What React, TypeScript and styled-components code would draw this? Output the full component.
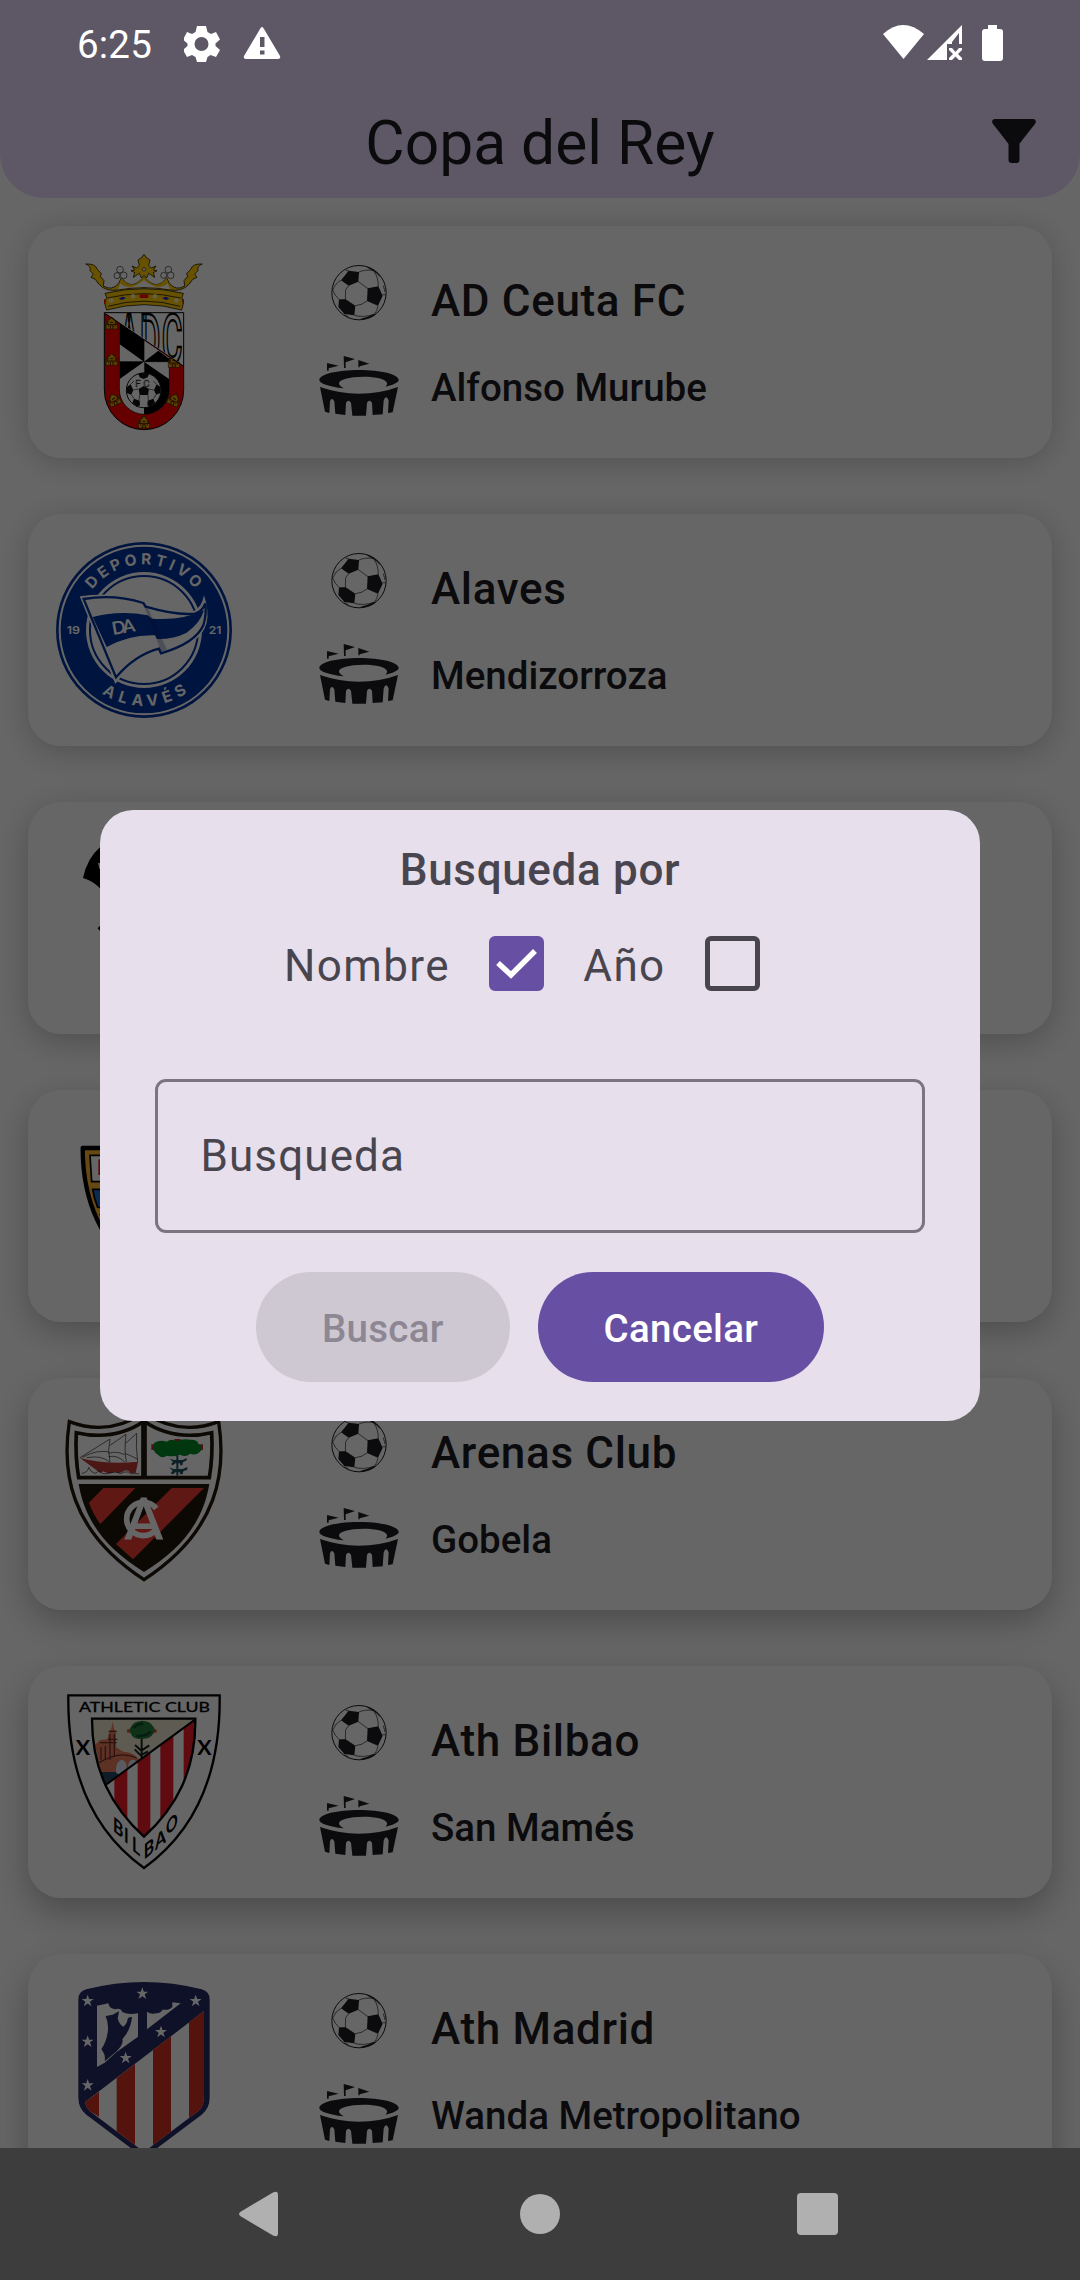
import React from "react";
import styled, { createGlobalStyle } from "styled-components";

const GlobalStyle = createGlobalStyle`
  * { box-sizing: border-box; }
  body { margin: 0; background: #000; font-family: Roboto, "Liberation Sans", sans-serif; }
`;

const Screen = styled.div`
  position: relative;
  width: 1080px;
  height: 2280px;
  overflow: hidden;
  display: flex;
  flex-direction: column;
  background: #ffffff;
  color: #1c1b1f;
`;

const TopBar = styled.header`
  flex: none;
  height: 198px;
  padding: 90px 33px 0;
  display: grid;
  grid-template-columns: 66px 1fr 66px;
  align-items: start;
  background: #eaddff;
  border-radius: 0 0 44px 44px;
`;

const Title = styled.h1`
  margin: 1px 0 0;
  grid-column: 2;
  text-align: center;
  font-size: 60.5px;
  font-weight: 400;
  line-height: 106px;
`;

const FilterButton = styled.button`
  margin: 18px 0 0;
  padding: 0;
  border: 0;
  background: none;
  color: inherit;
  width: 66px;
  height: 66px;
  svg { display: block; }
`;

const List = styled.main`
  flex: 1;
  min-height: 0;
  overflow: hidden;
  padding: 28px;
  display: flex;
  flex-direction: column;
  gap: 56px;
`;

const Card = styled.article<{ $depth: number }>`
  flex: none;
  height: 232px;
  padding: 28px;
  display: flex;
  background: #ffffff;
  border-radius: 33px;
  box-shadow: 0 ${(p) => 4 + p.$depth * 2}px ${(p) => 30 + p.$depth}px rgba(0, 0, 0, ${(p) => 0.2 + p.$depth * 0.015});
`;

const CrestBox = styled.div`
  width: 176px;
  height: 176px;
  svg { display: block; overflow: visible; }
`;

const IconColumn = styled.div`
  margin-left: 87px;
  width: 80px;
  padding-top: 9px;
  display: flex;
  flex-direction: column;
  align-items: center;
  gap: 33px;
  svg { display: block; flex: none; }
`;

const TextColumn = styled.div`
  margin-left: 32px;
  padding-top: 14px;
`;

const TeamName = styled.div`
  font-size: 44px;
  font-weight: 500;
  line-height: 66px;
  letter-spacing: 0.66px;
  white-space: nowrap;
`;

const Ground = styled.div`
  margin-top: 26px;
  font-size: 38.5px;
  font-weight: 500;
  line-height: 55px;
  letter-spacing: 0;
  white-space: nowrap;
`;

const Scrim = styled.div`
  position: absolute;
  inset: 0 0 132px;
  background: rgba(0, 0, 0, 0.6);
`;

const StatusBar = styled.div`
  position: absolute;
  inset: 0 0 auto;
  height: 88px;
  padding: 0 77px 0 77px;
  display: flex;
  justify-content: space-between;
  color: #ffffff;
`;

const StatusGroup = styled.div`
  display: flex;
  svg { display: block; }
`;

const Clock = styled.span`
  width: 107px;
  font-size: 38.5px;
  line-height: 89px;
  letter-spacing: 0.2px;
`;

const Dialog = styled.section`
  position: absolute;
  left: 100px;
  top: 810px;
  width: 880px;
  height: 611px;
  padding: 27px 55px 0;
  display: flex;
  flex-direction: column;
  background: #e7dfec;
  color: #49454f;
  border-radius: 33px;
`;

const DialogTitle = styled.h2`
  margin: 0;
  text-align: center;
  font-size: 44px;
  font-weight: 500;
  line-height: 66px;
  letter-spacing: 0.66px;
`;

const Options = styled.div`
  height: 120px;
  display: flex;
  align-items: center;
  padding-left: 129px;
`;

const OptionLabel = styled.span`
  font-size: 44px;
  line-height: 66px;
  letter-spacing: 1.375px;
  padding-top: 5px;
`;

const CheckBox = styled.span<{ $checked?: boolean }>`
  flex: none;
  width: 55px;
  height: 55px;
  margin: 0 39.5px 0 39px;
  border-radius: 6px;
  border: 5px solid ${(p) => (p.$checked ? "#6750a4" : "#49454f")};
  background: ${(p) => (p.$checked ? "#6750a4" : "transparent")};
  svg { display: block; margin: -5px; }
`;

const Field = styled.div`
  margin-top: 56px;
  height: 154px;
  padding: 0 42.5px;
  display: flex;
  align-items: center;
  border: 3px solid #7b7483;
  border-radius: 11px;
  font-size: 44px;
  letter-spacing: 1.1px;
`;

const Actions = styled.div`
  margin-top: 39px;
  display: flex;
  justify-content: center;
  gap: 28px;
`;

const Action = styled.button<{ $primary?: boolean }>`
  height: 110px;
  padding: 2px 66px 0;
  border: 0;
  border-radius: 55px;
  font: 500 38.5px Roboto, "Liberation Sans", sans-serif;
  letter-spacing: 0.28px;
  background: ${(p) => (p.$primary ? "#6750a4" : "#cec8d3")};
  color: ${(p) => (p.$primary ? "#ffffff" : "#8d8794")};
`;

const NavBar = styled.nav`
  flex: none;
  height: 132px;
  display: flex;
  align-items: center;
  justify-content: space-between;
  padding: 0 238px 0 236px;
  background: #3d3d3d;
  svg { display: block; }
`;

const Ball = () => (
  <svg width="58" height="59" viewBox="930 159 174 177" fill="none" stroke="#1c1b1f">
    <circle cx="1017" cy="248" r="81.5" strokeWidth="3" />
    <g fill="#1c1b1f" stroke="none">
      <path d="M986 182L1017 186L1015 215L986 227L963 211Z" />
      <path d="M1043 235L1075 229L1088 257L1074 287L1041 273Z" />
      <path d="M957 268H977L1006 287L1003 316L973 312L955 291Z" />
      <path d="M1042 170Q1068 178 1084 204L1078 199Q1066 184 1042 173Z" />
      <path d="M1022 329Q1050 327 1067 314L1062 312Q1044 321 1022 326Z" />
    </g>
    <g strokeWidth="2">
      <path d="M986 227L977 239L976 270M1015 215L1044 236M1041 273Q1025 286 1006 287" />
      <path d="M963 211Q946 219 939 239M957 268Q944 256 938 240M986 182L978 181" />
      <path d="M1017 186Q1035 177 1065 182M1062 184Q1075 202 1075 229M1088 254L1097 254M1074 287Q1073 302 1062 314" />
      <path d="M1003 316Q1030 324 1062 313M973 312L988 324M1090 227L1095 246" />
    </g>
  </svg>
);

const Stadium = () => (
  <svg width="80" height="62" viewBox="897 435 240 186" fill="#1c1b1f">
    <path d="M921 459L956 467L926 475V482H921Z" />
    <path d="M971 438L1005 447L977 457V474H972Z" />
    <path d="M1015 450L1048 461L1019 469V472H1015Z" />
    <path d="M898 510C898 493 951 480 1017 480S1136 493 1136 510C1136 517 1120 525 1096 530C1101 527 1101 523 1101 520C1101 508 1070 500 1029 500S957 509 957 520C957 527 965 531 972 535C925 530 898 520 898 510Z" />
    <path d="M900 531Q958 551 1017 551Q1080 551 1134 531L1118 607L1104 609L1106 572Q1098 552 1091 572L1088 613L1058 615L1056 578Q1048 566 1041 578L1038 617H997L993 578Q985 566 978 578L976 615L946 611L943 574Q935 560 930 574L928 609L915 605Z" />
  </svg>
);

const Castle = ({ x, y, r = 0 }: { x: number; y: number; r?: number }) => (
  <g transform={`translate(${x} ${y}) rotate(${r})`}>
    <path d="M-17 17V-3H-14V2H-11V-10H-6V-15H-2V-18H2V-15H6V-10H11V2H14V-3H17V17Z" fill="#e0ad00" stroke="#3a2a00" strokeWidth="2" />
    <path d="M-4 17V8Q0 3 4 8V17M-11 8H-8M8 8H11M-5 -3H5M-16 4H16" fill="none" stroke="#5a1000" strokeWidth="3" />
  </g>
);

const CeutaCrest = () => (
  <svg width="176" height="176" viewBox="108 132 528 528">
    <defs>
      <clipPath id="ceuta-shield"><path d="M253 308H491V540A119 119 0 0 1 253 540Z" /></clipPath>
      <clipPath id="ceuta-core"><path d="M298 340L372 390L448 443V538A75 75 0 0 1 298 538Z" /></clipPath>
      <clipPath id="ceuta-top"><path d="M258 308H491V466Z" /></clipPath>
    </defs>
    <g fill="#ffcc00" stroke="#2a2000" strokeWidth="2.5">
      <path d="M197 162Q226 160 232 178L245 192L240 198L252 212L250 228Q276 244 296 220L304 203Q334 246 372 200Q410 246 440 203L448 220Q468 244 494 228L492 212L504 198L499 192L512 178Q518 160 547 162Q530 168 534 182L524 192L531 202L518 208L508 222Q486 246 450 240Q372 226 294 240Q258 246 236 222L226 208L213 202L220 192L210 182Q214 168 197 162Z" />
      <path d="M304 214Q322 240 345 225L372 210L399 225Q422 240 440 214L450 238Q372 224 294 238Z" fill="#ffffff" stroke="none" />
      <path d="M304 203L300 220Q330 246 372 209Q414 246 444 220L440 203Q410 246 372 200Q334 246 304 203Z" stroke="none" />
      <path d="M255 250Q372 222 490 250L486 262L490 280L485 300Q372 268 260 300L254 280L260 262Z" />
      <path d="M372 133L380 144L390 150L386 166L394 174L408 168L400 180L411 182L400 188L404 202L386 190L380 204L372 196L364 204L358 190L340 202L344 188L333 182L344 180L336 168L350 174L358 166L354 150L364 144Z" />
    </g>
    <path d="M262 264Q372 238 482 264M264 289Q372 258 480 289" fill="none" stroke="#4a3900" strokeWidth="3" />
    <rect x="359" y="253" width="26" height="11" fill="#ff1000" />
    <path d="M296 266L308 260L318 264L306 270ZM426 264L438 260L448 266L438 270Z" fill="#1820d0" />
    <path d="M252 268h4v14h-4zM488 268h4v14h-4z" fill="#f01010" />
    <g fill="#ffffff" stroke="#222" strokeWidth="2">
      <circle cx="300" cy="179" r="10" /><circle cx="291" cy="197" r="9" /><circle cx="311" cy="196" r="10" />
      <circle cx="445" cy="179" r="10" /><circle cx="431" cy="196" r="9" /><circle cx="452" cy="196" r="10" />
      <circle cx="372" cy="178" r="5" />
    </g>
    <g fill="#fff0b0">
      <circle cx="339" cy="259" r="7" /><circle cx="405" cy="259" r="7" /><circle cx="274" cy="271" r="7" /><circle cx="469" cy="271" r="7" />
    </g>
    <g clipPath="url(#ceuta-shield)">
      <path d="M253 308L491 468V660H253Z" fill="#ff0000" />
      <path d="M298 340L448 443V538A75 75 0 0 1 298 538Z" fill="#ffffff" />
      <g clipPath="url(#ceuta-core)" fill="#000">
        <path d="M298 330V402L372 455V390ZM372 455L415 422L460 455ZM298 455H372L298 508ZM372 455L448 508V620H372Z" />
      </g>
      <path d="M298 340V538A75 75 0 0 0 448 538V443M372 390V455M298 455H448" fill="none" stroke="#000" strokeWidth="2" />
      <path d="M372 455V490" stroke="#eee" strokeWidth="2" />
      <Castle x={275} y={340} /><Castle x={275} y={449} /><Castle x={462} y={455} />
      <Castle x={282} y={569} r={-25} /><Castle x={462} y={569} r={25} /><Castle x={372} y={637} />
      <path d="M258 308L491 465V308Z" fill="#ffffff" />
    </g>
    <g clipPath="url(#ceuta-top)">
      <g transform="translate(297 460) scale(1 2.55)" fontFamily="Roboto, sans-serif" fontSize="80" fontWeight="500" fill="none" stroke="#000" strokeWidth="3">
        <text x="0" y="0" textLength="60" lengthAdjust="spacingAndGlyphs">A</text>
        <text x="62" y="0" textLength="62" lengthAdjust="spacingAndGlyphs">D</text>
        <text x="128" y="0" textLength="62" lengthAdjust="spacingAndGlyphs">C</text>
      </g>
    </g>
    <path d="M256 311L491 469" stroke="#000" strokeWidth="3" />
    <circle cx="371" cy="541" r="52" fill="#fff" stroke="#111" strokeWidth="3" />
    <g fill="#111">
      <path d="M371 528L387 537L384 555H359L356 537ZM355 491Q371 486 387 491L383 502L371 507L359 502ZM320 532L332 523L340 540L334 554L320 549ZM422 532L410 523L402 540L408 554L422 549ZM337 578L342 566L359 572L360 586L350 590ZM405 578L400 566L383 572L382 586L392 590Z" />
    </g>
    <path d="M332 523L342 513M410 523L400 513M340 540L356 537M387 537L402 540M359 555L357 572M384 555L385 572M334 554L342 566M408 554L400 566" stroke="#222" strokeWidth="2" />
    <text x="371" y="530" textAnchor="middle" fontFamily="Roboto, sans-serif" fontSize="29" letterSpacing="8" fill="#fff" stroke="#222" strokeWidth="1.5">FC</text>
    <path d="M253 308H491V540A119 119 0 0 1 253 540Z" fill="none" stroke="#000" strokeWidth="3" />
  </svg>
);

const AlavesCrest = () => (
  <svg width="176" height="176" viewBox="108 126 528 528">
    <defs>
      <path id="alaves-top" d="M175 390A197 197 0 0 1 569 390" />
      <path id="alaves-bottom" d="M144 390A228 228 0 0 0 600 390" />
    </defs>
    <circle cx="372" cy="390" r="264" fill="#0032a0" />
    <circle cx="372" cy="390" r="253" fill="none" stroke="#fff" strokeWidth="6" />
    <circle cx="372" cy="390" r="174" fill="#fff" />
    <circle cx="372" cy="390" r="162" fill="none" stroke="#0032a0" strokeWidth="6" />
    <path d="M179 289Q283 272 378 306Q470 339 522 333Q545 322 552 286Q568 334 560 368Q552 400 520 425Q480 452 419 467L413 454Q345 474 286 552Z" fill="#fff" />
    <path d="M191 297Q283 281 370 309L377 320Q470 347 525 341Q546 335 556 310Q560 344 550 376Q526 430 423 460L417 446Q345 465 288 532Z" fill="#fff" stroke="#0032a0" strokeWidth="7" />
    <path d="M218 351Q300 330 383 346L396 356Q490 362 552 330Q542 368 500 398Q460 418 411 417L405 406Q330 403 260 441Z" fill="#0032a0" />
    <path d="M372 318L384 325L441 449L424 455Z" fill="#001f63" fillOpacity=".25" />
    <g fill="#fff" fontFamily="Inter, Lato, sans-serif" fontWeight="700">
      <text fontSize="46" textLength="356"><textPath href="#alaves-top" startOffset="130" textLength="356">DEPORTIVO</textPath></text>
      <text fontSize="47" textLength="272"><textPath href="#alaves-bottom" startOffset="224" textLength="272">ALAVÉS</textPath></text>
      <text x="160" y="402" textAnchor="middle" fontSize="33" fontWeight="600" textLength="40" lengthAdjust="spacingAndGlyphs">19</text>
      <text x="585" y="402" textAnchor="middle" fontSize="33" fontWeight="600" textLength="38" lengthAdjust="spacingAndGlyphs">21</text>
      <text transform="translate(279 405) rotate(-10)" fontFamily="Lato, sans-serif" fontSize="54" letterSpacing="-8">DA</text>
    </g>
  </svg>
);

const BatCrest = () => (
  <svg width="176" height="176" viewBox="108 150 528 528">
    <path d="M189 294Q202 234 240 202Q300 150 372 152Q444 150 504 202Q542 234 555 294Q510 315 490 380Q372 330 264 360Q240 310 189 294Z" fill="#000" />
    <path d="M234 248L240 250L246 266H238Z" fill="#fff" />
    <path d="M233 445L240 437L247 445L240 453Z" fill="#000" />
  </svg>
);

const GoldShieldCrest = () => (
  <svg width="176" height="176" viewBox="108 174 528 528">
    <path d="M188 264H556C556 420 500 560 372 640C244 560 188 420 188 264Z" fill="#ffb52d" stroke="#000" strokeWidth="13" strokeLinejoin="round" />
    <path d="M210 286H534L529 365H215Z" fill="#fff" stroke="#000" strokeWidth="5" />
    <path d="M218 388H526Q510 440 490 470L233 442Q222 415 218 388Z" fill="#1e6bcd" stroke="#000" strokeWidth="5" />
    <rect x="235" y="298" width="40" height="47" fill="#e8202c" />
    <path d="M238 464H300" stroke="#000" strokeWidth="4" />
  </svg>
);

const ArenasCrest = () => (
  <svg width="176" height="176" viewBox="108 108 528 528">
    <path d="M148 155Q265 200 372 128Q479 200 596 155C618 300 600 480 372 629C144 480 126 300 148 155Z" fill="#fff" stroke="#201409" strokeWidth="10" />
    <path d="M169 188Q284 214 372 154Q460 214 575 188Q579 258 568 323H176Q165 258 169 188Z" fill="#fff" stroke="#201409" strokeWidth="11" />
    <path d="M372 140V323" stroke="#201409" strokeWidth="17" />
    <path d="M176 342H568C550 450 488 535 372 606C256 535 194 450 176 342Z" fill="#201409" />
    <path d="M250 354H346L241 462Q218 430 207 398ZM455 354H552L339 568L288 522Z" fill="#f03e36" />
    <path d="M180 264Q260 285 354 275L347 309H332Q322 296 310 304Q298 314 285 305Q268 316 250 304L241 309Z" fill="#c03a38" />
    <g fill="none" stroke="#222" strokeWidth="2">
      <path d="M180 263L270 207Q262 240 270 278M187 262Q230 238 268 246M200 263Q245 255 268 276M270 226L318 193Q312 240 319 276M266 250Q290 242 313 254M266 260Q292 254 314 276M317 220L350 190Q347 230 353 276M314 250Q330 255 353 268" />
      <path d="M185 310Q204 308 206 292Q212 307 224 310Q232 309 237 301Q243 313 260 311Q286 302 302 311Q320 300 332 311H358" />
    </g>
    <path d="M394 223H408V240H394ZM463 207H482V216H463ZM538 223H549V240H538Z" fill="#c02f35" />
    <path d="M410 215Q425 210 440 215Q455 204 470 214Q490 205 510 209Q533 208 535 221Q550 228 543 242Q530 258 510 251Q498 263 480 254Q462 262 440 257Q425 268 414 254Q398 246 401 230Q397 219 410 215Z" fill="#008a25" />
    <path d="M472 256V317" stroke="#1e5260" strokeWidth="6" />
    <path d="M449 266L463 270H488L500 264V271L489 277L487 286H481L479 280H466L459 286L453 283L459 275ZM447 292L460 297H488L502 291V299L490 304L488 313H481L479 307H466L459 313L452 310L458 302Z" fill="#1e5260" />
    <circle cx="370" cy="447" r="50" fill="none" stroke="#fff" strokeWidth="17" pathLength="360" strokeDasharray="278 82" strokeDashoffset="-41" />
    <text x="313" y="506" fontFamily="Roboto, sans-serif" fontSize="170" fontWeight="400" fill="#fff" stroke="#fff" strokeWidth="3" textLength="117" lengthAdjust="spacingAndGlyphs">A</text>
  </svg>
);

const AthleticCrest = () => (
  <svg width="176" height="176" viewBox="108 102 528 528">
    <defs>
      <clipPath id="athletic-in"><path d="M216 176H526C528 330 470 440 372 530C274 440 216 330 216 176Z" /></clipPath>
      <clipPath id="athletic-low"><path d="M526 178L256 375V560H540V178Z" /></clipPath>
    </defs>
    <path d="M145 106H599C602 330 530 510 372 624C214 510 142 330 145 106Z" fill="#fff" stroke="#000" strokeWidth="7" />
    <g clipPath="url(#athletic-in)">
      <path d="M210 170H530L250 380H210Z" fill="#ebe6cd" />
      <path d="M225 255L240 240L262 238L268 213L274 206L278 184L282 206L288 215V262L310 275Q340 275 358 300L250 380Z" fill="#e87d5c" />
      <path d="M266 214H290M264 238H292M240 248H290M243 262V300M256 258V300M270 222V300M283 222V290M238 308Q300 270 350 294" stroke="#70302a" strokeWidth="4" fill="none" />
      <path d="M288 348V326Q290 302 306 299Q320 302 320 325V340ZM324 322Q324 302 338 299Q350 300 348 310Z" fill="#dce6f5" />
      <path d="M240 336H286L300 346L258 378Z" fill="#274a68" />
      <path d="M365 225V295M345 255L364 272L388 256M344 268L362 286L384 274" stroke="#1c2420" strokeWidth="6" fill="none" />
      <circle cx="326" cy="213" r="6" fill="#e25b30" /><circle cx="405" cy="213" r="6" fill="#e25b30" />
      <path d="M333 200Q340 184 365 182Q392 183 398 198Q410 208 399 222Q390 238 365 236Q340 240 332 220Q325 210 333 200Z" fill="#277a3c" />
      <path d="M340 205Q352 190 370 192M350 228Q378 230 392 215" stroke="#0d4a26" strokeWidth="7" fill="none" />
      <g clipPath="url(#athletic-low)">
        <path d="M210 176H540V560H210Z" fill="#fff" />
        <path d="M283 176H322V560H283ZM353 176H391V560H353ZM421 176H460V560H421ZM491 176H540V560H491Z" fill="#f01c26" />
      </g>
    </g>
    <path d="M526 178L258 374" stroke="#000" strokeWidth="6" />
    <path d="M216 176H526C528 330 470 440 372 530C274 440 216 330 216 176Z" fill="none" stroke="#000" strokeWidth="7" />
    <g fontFamily="Lato, sans-serif" fontWeight="700" fill="#000">
      <text x="177" y="156" fontSize="42" fontWeight="400" stroke="#000" strokeWidth="1" textLength="393" lengthAdjust="spacingAndGlyphs">ATHLETIC CLUB</text>
      <text x="167" y="284" fontSize="60" textLength="43" lengthAdjust="spacingAndGlyphs">X</text>
      <text x="532" y="284" fontSize="60" textLength="43" lengthAdjust="spacingAndGlyphs">X</text>
      <g fontSize="62">
        <text transform="matrix(.76 .62 0 1 279 512)">B</text>
        <text transform="matrix(.76 .62 0 1 312 543)">I</text>
        <text transform="matrix(.76 .62 0 1 336 570)">L</text>
        <text transform="matrix(.76 -.62 0 1 371 600)">B</text>
        <text transform="matrix(.76 -.62 0 1 405 572)">A</text>
        <text transform="matrix(.7 -.57 0 1 438 528)">O</text>
      </g>
    </g>
  </svg>
);

const STAR = "M0 -19L4.5 -6H18L7 2L11.500 16L0 7.500L-11.500 16L-7 2L-18 -6H-4.500Z";
const STARS = [[203, 183], [367, 161], [527, 183], [203, 305], [203, 436], [317, 354], [423, 276]];

const AtletiCrest = () => (
  <svg width="176" height="176" viewBox="108 126 528 528">
    <path d="M175 178Q175 155 199 148Q372 104 545 148Q569 155 569 178V472Q569 506 545 524L372 654L199 524Q175 506 175 472Z" fill="#232b64" />
    <path d="M195 486L552 213V470Q552 500 534 514L372 636L210 514Q198 504 195 486Z" fill="#fff" />
    <path d="M195 486L237 455V530L210 514Q198 504 195 486ZM290 414L345 372V616L290 574ZM399 330L453 289V575L399 616ZM507 247L552 213V470Q552 500 534 514L507 534Z" fill="#d23321" />
    <path d="M231 197L265 190Q268 206 285 208Q302 203 307 216Q325 226 354 220V290L289 337L254 368L231 381Z" fill="#fff" />
    <path d="M257 228L278 224L297 214Q295 228 293 236Q299 254 310 260Q322 250 323 236Q325 230 336 231Q333 260 319 282L307 298Q312 311 290 334L254 364Q258 345 244 328Q262 300 264 268Q265 248 257 228Z" fill="#232b64" />
    <path d="M381 215Q392 224 410 220Q423 219 427 209Q451 211 457 200V187L482 190L381 268Z" fill="#fff" />
    {STARS.map(([x, y]) => <path key={`${x}-${y}`} transform={`translate(${x} ${y})`} d={STAR} fill="#fff" />)}
  </svg>
);

type Team = { crest: React.ReactNode; name?: string; ground?: string };

const TEAMS: Team[] = [
  { crest: <CeutaCrest />, name: "AD Ceuta FC", ground: "Alfonso Murube" },
  { crest: <AlavesCrest />, name: "Alaves", ground: "Mendizorroza" },
  { crest: <BatCrest /> },
  { crest: <GoldShieldCrest /> },
  { crest: <ArenasCrest />, name: "Arenas Club", ground: "Gobela" },
  { crest: <AthleticCrest />, name: "Ath Bilbao", ground: "San Mamés" },
  { crest: <AtletiCrest />, name: "Ath Madrid", ground: "Wanda Metropolitano" },
];

const TeamCard = ({ team, depth }: { team: Team; depth: number }) => (
  <Card $depth={depth}>
    <CrestBox>{team.crest}</CrestBox>
    {team.name && (
      <>
        <IconColumn><Ball /><Stadium /></IconColumn>
        <TextColumn>
          <TeamName>{team.name}</TeamName>
          <Ground>{team.ground}</Ground>
        </TextColumn>
      </>
    )}
  </Card>
);

export default function App() {
  return (
    <>
      <GlobalStyle />
      <Screen>
        <TopBar>
          <Title>Copa del Rey</Title>
          <FilterButton>
            <svg width="66" height="66" viewBox="0 0 24 24" fill="currentColor">
              <path d="M4.250 5.610C6.270 8.200 10 13 10 13v6c0 .55.45 1 1 1h2c.55 0 1-.45 1-1v-6s3.720-4.800 5.740-7.390c.51-.66.04-1.610-.79-1.610H5.040c-.83 0-1.300.95-.79 1.610z" />
            </svg>
          </FilterButton>
        </TopBar>
        <List>
          {TEAMS.map((team, i) => <TeamCard key={i} team={team} depth={i} />)}
        </List>
        <NavBar>
          <svg width="44" height="48" viewBox="0 0 44 48" fill="#b0b0b0"><path d="M37 2.500Q42 0 42 5V43Q42 48 37 45.500L5 26.500Q1 24 5 21.500Z" /></svg>
          <svg width="46" height="42" viewBox="0 0 46 42" fill="#b0b0b0"><circle cx="25" cy="21" r="20" /></svg>
          <svg width="46" height="46" viewBox="0 0 46 46" fill="#b0b0b0"><rect x="1" y="2" width="41" height="42" rx="4" /></svg>
        </NavBar>
        <Scrim />
        <StatusBar>
          <StatusGroup>
            <Clock>6:25</Clock>
            <svg width="110" height="88" viewBox="184 0 110 88" fill="currentColor">
              <path fillRule="evenodd" d="M197 26H206L207.500 32L211 34L216 32L220 39.500L215.500 43.500V46L220 50L216 57L210.500 55L207.500 57L206 62H197L195.500 57L192 55L187 57L183 50L187.500 46V43.500L183 39.500L187 32L192 34L195.500 32ZM201.500 37A7 7 0 1 0 201.500 51A7 7 0 1 0 201.500 37Z" />
              <path fillRule="evenodd" d="M262 27Q263 27 264 29L280 56Q281 59 278 59H246Q243 59 244 56L260 29Q261 27 262 27ZM260 37V47H264.500V37ZM260 50.500V54.500H264.500V50.500Z" />
            </svg>
          </StatusGroup>
          <StatusGroup>
            <svg width="123" height="88" viewBox="880 0 123 88" fill="currentColor">
              <path d="M883 34Q903 16 924 34L903.500 59Z" />
              <path fillRule="evenodd" d="M962 25V44H959V33L952 42V44H947V60H927ZM949 48L952 48L955.500 52L959 48H962V50L958 54L962 58V60H959L955.500 56.500L952 60H949V58L953 54L949 50Z" />
              <path d="M988 25H997V29H1000Q1003 29 1003 32V58Q1003 61 1000 61H985Q982 61 982 58V32Q982 29 985 29H988Z" />
            </svg>
          </StatusGroup>
        </StatusBar>
        <Dialog>
          <DialogTitle>Busqueda por</DialogTitle>
          <Options>
            <OptionLabel>Nombre</OptionLabel>
            <CheckBox $checked>
              <svg width="55" height="55" viewBox="0 0 55 55" fill="none" stroke="#fff" strokeWidth="5.500"><path d="M9 27L22 39L46 15" /></svg>
            </CheckBox>
            <OptionLabel>Año</OptionLabel>
            <CheckBox />
          </Options>
          <Field>Busqueda</Field>
          <Actions>
            <Action>Buscar</Action>
            <Action $primary>Cancelar</Action>
          </Actions>
        </Dialog>
      </Screen>
    </>
  );
}
